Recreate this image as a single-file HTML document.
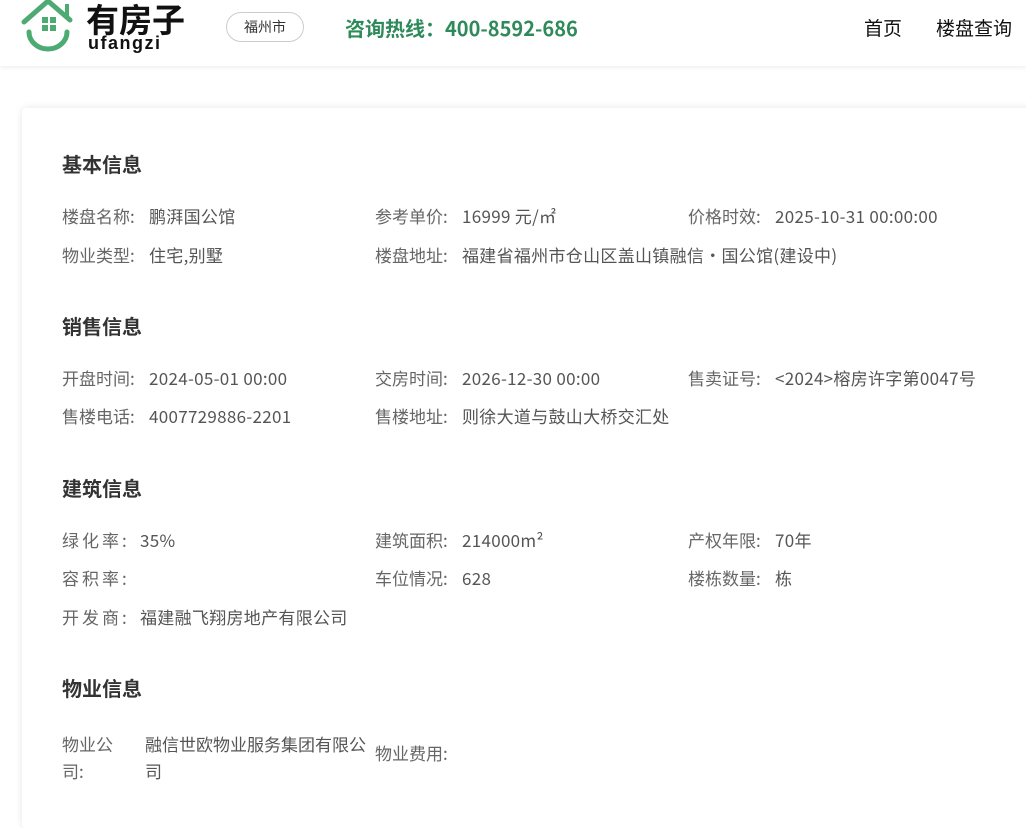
<!DOCTYPE html>
<html><head><meta charset="utf-8"><style>
body{margin:0;width:1026px;height:810px;overflow:hidden;background:#fff;font-family:"Noto Sans CJK SC","Liberation Sans",sans-serif;position:relative}
.a{position:absolute;white-space:nowrap;line-height:20px}
.hd{position:absolute;left:0;top:0;width:1026px;height:66px;background:#fff;box-shadow:0 2px 4px rgba(0,0,0,0.06)}
.card{position:absolute;left:22px;top:108px;width:1020px;height:720px;background:#fff;border-radius:4px;box-shadow:0 0 8px rgba(0,0,0,0.1)}
.h{font-size:20px;font-weight:bold;color:#333}
.l{font-size:17px;color:#666}
.v{font-size:17px;color:#555;letter-spacing:0.3px}
</style></head><body>
<div class="hd">
<svg style="position:absolute;left:20px;top:0" width="58" height="52" viewBox="0 0 58 52">
<path d="M4 22 L28 1 L50 20" fill="none" stroke="#4caa72" stroke-width="5" stroke-linecap="round"/>
<path d="M47 4 V16" stroke="#4caa72" stroke-width="4"/>
<path d="M9 32 A19 17 0 0 0 47 32" fill="none" stroke="#4caa72" stroke-width="5" stroke-linecap="round"/>
<rect x="22" y="17" width="6" height="6" fill="#4caa72"/><rect x="30" y="17" width="6" height="6" fill="#4caa72"/>
<rect x="22" y="25" width="6" height="6" fill="#4caa72"/><rect x="30" y="25" width="6" height="6" fill="#4caa72"/>
</svg>
<div class="a" style="left:86px;top:0;font-size:33px;line-height:36px;font-weight:bold;color:#111">有房子</div>
<div class="a" style="left:88px;top:33px;font-size:18px;font-weight:bold;color:#111;letter-spacing:1.5px;font-family:'Liberation Sans',sans-serif">ufangzi</div>
<div class="a" style="left:226px;top:12px;width:76px;height:28px;border:1px solid #ccc;border-radius:15px;text-align:center;line-height:28px;font-size:14px;color:#333">福州市</div>
<div class="a" style="left:345px;top:18px;font-size:20px;font-weight:bold;color:#2e8a5a">咨询热线：400-8592-686</div>
<div class="a" style="left:864px;top:18px;font-size:19px;color:#111">首页</div>
<div class="a" style="left:936px;top:18px;font-size:19px;color:#111">楼盘查询</div>
</div>
<div class="card"></div>
<div class="a h" style="left:62px;top:154px">基本信息</div>
<div class="a l" style="left:62px;top:206px">楼盘名称:</div><div class="a v" style="left:149px;top:206px">鹏湃国公馆</div>
<div class="a l" style="left:375px;top:206px">参考单价:</div><div class="a v" style="left:462px;top:206px">16999 元/㎡</div>
<div class="a l" style="left:688px;top:206px">价格时效:</div><div class="a v" style="left:775px;top:206px">2025-10-31 00:00:00</div>
<div class="a l" style="left:62px;top:245px">物业类型:</div><div class="a v" style="left:149px;top:245px">住宅,别墅</div>
<div class="a l" style="left:375px;top:245px">楼盘地址:</div><div class="a v" style="left:462px;top:245px">福建省福州市仓山区盖山镇融信・国公馆(建设中)</div>
<div class="a h" style="left:62px;top:316px">销售信息</div>
<div class="a l" style="left:62px;top:368px">开盘时间:</div><div class="a v" style="left:149px;top:368px">2024-05-01 00:00</div>
<div class="a l" style="left:375px;top:368px">交房时间:</div><div class="a v" style="left:462px;top:368px">2026-12-30 00:00</div>
<div class="a l" style="left:688px;top:368px">售卖证号:</div><div class="a v" style="left:775px;top:368px">&lt;2024&gt;榕房许字第0047号</div>
<div class="a l" style="left:62px;top:406px">售楼电话:</div><div class="a v" style="left:149px;top:406px">4007729886-2201</div>
<div class="a l" style="left:375px;top:406px">售楼地址:</div><div class="a v" style="left:462px;top:406px">则徐大道与鼓山大桥交汇处</div>
<div class="a h" style="left:62px;top:478px">建筑信息</div>
<div class="a l" style="left:62px;top:530px;letter-spacing:3px">绿化率:</div><div class="a v" style="left:140px;top:530px">35%</div>
<div class="a l" style="left:375px;top:530px">建筑面积:</div><div class="a v" style="left:462px;top:530px">214000m²</div>
<div class="a l" style="left:688px;top:530px">产权年限:</div><div class="a v" style="left:775px;top:530px">70年</div>
<div class="a l" style="left:62px;top:568px;letter-spacing:3px">容积率:</div>
<div class="a l" style="left:375px;top:568px">车位情况:</div><div class="a v" style="left:462px;top:568px">628</div>
<div class="a l" style="left:688px;top:568px">楼栋数量:</div><div class="a v" style="left:775px;top:568px">栋</div>
<div class="a l" style="left:62px;top:607px;letter-spacing:3px">开发商:</div><div class="a v" style="left:140px;top:607px">福建融飞翔房地产有限公司</div>
<div class="a h" style="left:62px;top:678px">物业信息</div>
<div class="a l" style="left:62px;top:730px;line-height:27px">物业公<br>司:</div>
<div class="a v" style="left:145px;top:730px;line-height:27px;letter-spacing:0">融信世欧物业服务集团有限公<br>司</div>
<div class="a l" style="left:375px;top:743px">物业费用:</div>
</body></html>
